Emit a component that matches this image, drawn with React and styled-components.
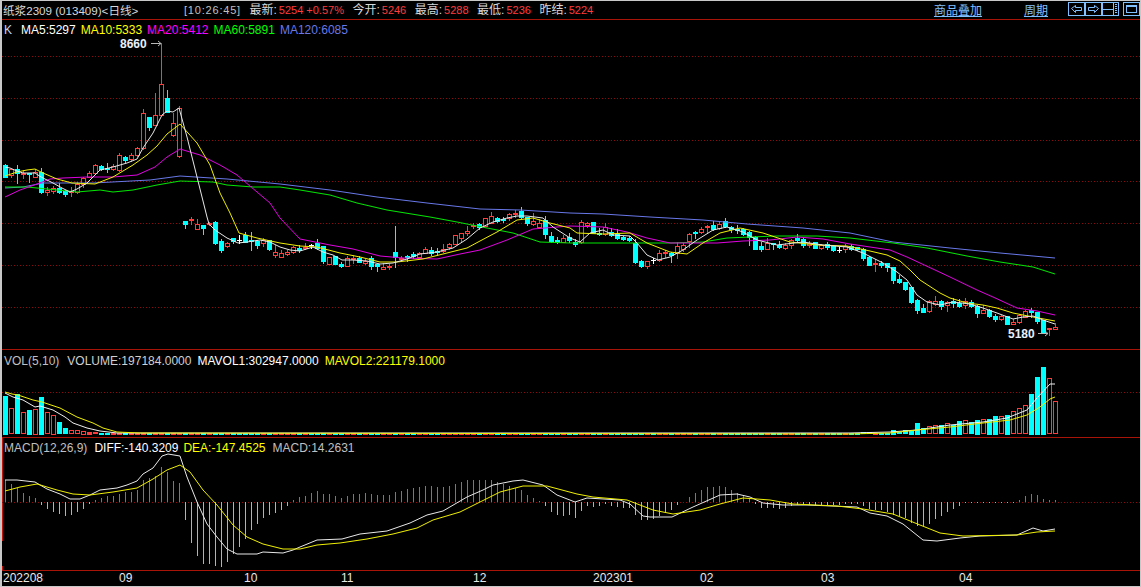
import React from "react";
import styled, { createGlobalStyle } from "styled-components";

const RED = "#ff3c3c";
const CYAN = "#00ffff";
const GRID = "#8c0a0a";
const FONT = `"Liberation Sans", "Noto Sans CJK SC", sans-serif`;

// [kind, bodyTop, bodyBottom, high, low] in page pixels
const CANDLES = `c 165 177 164 177|r 169 175 169 177|c 169 173 165 183|r 173 174 170 178|c 173 174 173 182|r 172 177 169 177|c 172 192 168 193|r 190 192 187 195|r 188 191 186 193|c 188 192 183 193|c 191 194 190 196|r 191 192 187 196|r 184 192 182 193|r 178 184 177 187|r 173 177 171 177|r 165 173 164 173|c 166 169 165 170|c 168 169 163 172|r 166 169 164 170|r 155 170 153 171|c 157 160 156 162|r 155 159 153 161|r 148 155 147 156|r 113 148 109 149|c 117 127 117 130|r 115 125 93 125|r 84 115 43 115|c 98 112 90 112|r 123 135 113 136|r 108 156 106 157|c 221 224 221 228|r 219 220 217 224|r 224 229 219 229|c 225 228 225 234|r 223 224 222 225|c 222 243 221 244|c 241 250 239 252|r 243 246 242 247|c 238 241 238 243|w 240 240 235 243|c 235 242 232 242|c 240 240 232 250|c 241 245 240 248|r 240 243 238 246|c 240 249 240 250|r 252 255 245 257|r 253 257 250 257|r 252 254 250 255|r 247 252 246 253|c 248 250 245 252|r 247 248 243 249|w 245 245 244 248|c 243 248 239 249|c 246 261 246 263|r 257 264 257 264|c 256 264 256 264|c 264 266 262 267|r 258 266 256 266|r 258 259 255 263|c 258 262 256 262|r 261 263 259 264|c 258 266 256 269|c 264 266 264 271|r 267 269 263 269|r 266 267 264 269|c 252 257 226 267|r 258 259 256 261|c 256 257 255 261|c 254 256 252 258|r 253 257 252 257|r 249 253 247 253|c 250 253 247 255|c 251 252 248 255|r 249 251 244 252|r 244 247 243 249|r 235 244 235 244|r 233 238 233 242|r 231 233 226 235|r 225 226 223 228|c 224 227 223 229|r 218 226 218 226|r 216 223 212 223|c 218 221 217 222|c 219 220 217 222|r 214 218 213 220|r 213 214 210 217|c 211 217 207 218|c 217 223 217 225|r 221 224 213 225|r 223 227 219 227|c 220 234 216 238|c 236 241 232 242|c 240 242 237 243|r 238 242 235 242|c 237 240 233 242|c 242 244 239 246|r 222 242 220 243|r 223 225 222 227|c 222 233 222 233|c 233 234 228 235|r 227 234 223 235|c 232 235 228 236|c 234 238 229 239|c 237 239 236 240|c 238 240 236 241|c 243 262 239 263|c 261 266 260 267|r 261 266 261 268|w 260 260 258 263|r 253 260 250 261|r 252 253 250 257|c 253 255 252 262|r 246 253 242 258|r 245 249 243 251|r 234 241 233 247|c 232 233 231 238|r 229 232 227 233|r 226 227 225 232|c 225 229 221 230|r 224 228 221 229|c 221 226 218 227|c 227 229 226 232|c 229 230 225 233|c 229 234 228 235|c 232 237 231 245|c 237 249 236 249|c 246 249 242 251|r 243 249 238 249|c 243 244 243 249|c 245 247 241 248|r 245 248 243 249|r 240 245 239 248|c 238 240 234 242|c 239 245 238 247|r 243 245 241 247|c 242 248 242 248|r 245 248 244 249|c 244 247 242 249|c 246 250 245 251|w 250 250 247 252|r 246 249 244 252|c 246 249 244 250|c 247 249 247 250|c 249 258 248 260|c 257 265 256 265|r 263 264 259 271|c 263 265 261 267|c 263 267 263 271|c 267 280 267 283|c 279 282 275 283|c 282 289 282 290|c 287 302 287 303|c 300 310 299 313|c 308 312 304 312|r 301 311 300 312|r 301 304 296 305|c 301 306 300 309|r 302 305 301 311|c 301 303 298 307|c 303 306 299 307|r 301 305 298 308|c 302 306 300 307|c 306 313 305 317|r 310 313 305 313|c 310 316 309 317|c 316 319 314 321|r 316 319 315 320|c 316 324 316 324|r 322 324 319 324|r 315 322 314 323|r 311 317 310 317|c 310 312 308 317|c 312 321 312 323|c 320 332 320 333|r 328 329 328 335|r 327 329 323 329`
  .split("|")
  .map((row) => row.split(" "))
  .map(([kind, ...nums]) => [kind, ...nums.map(Number)]);

const MA5 = "5,167 10,168 17,171 23,173 35,173 41,177 53,183 62,188 70,192 77,189 87,183 100,170 113,167 127,163 137,159 143,148 153,133 162,115 167,111 173,112 179,108 187,137 197,177 207,217 209,224 215,230 227,238 238,243 247,242 260,240 270,242 280,247 290,250 300,251 313,247 323,252 333,255 342,260 353,260 367,261 380,264 393,263 407,259 420,254 437,252 453,248 467,239 480,228 493,222 507,218 517,216 527,216 543,218 553,227 570,238 580,242 590,233 603,230 613,235 630,236 637,243 647,255 658,260 670,257 683,250 697,240 713,230 727,227 743,232 757,240 777,245 803,242 823,245 847,247 863,253 883,263 897,272 907,280 917,295 927,302 940,305 953,302 970,304 983,308 997,313 1013,319 1023,317 1033,316 1043,320 1055,324";
const MA10 = "5,176 17,172 27,170 35,169 43,173 57,179 72,183 95,184 113,177 133,165 147,155 157,146 167,134 180,124 197,143 210,165 220,193 230,213 239,233 257,238 280,243 300,246 317,247 340,253 360,257 380,262 397,262 423,259 447,253 467,248 480,241 497,232 517,220 533,218 550,223 570,228 577,233 603,234 630,233 647,243 670,252 687,254 703,243 720,233 740,228 763,233 790,242 817,245 847,246 870,251 887,255 900,261 910,270 920,280 940,293 950,298 967,303 983,305 997,308 1013,313 1033,317 1055,321";
const MA20 = "5,197 20,190 37,184 50,179 63,178 87,177 113,177 137,175 155,167 167,157 180,149 200,155 220,165 237,175 257,192 270,203 280,218 300,239 330,245 353,249 380,256 403,258 437,259 460,254 480,250 507,240 533,229 557,227 570,226 603,227 627,232 647,238 670,243 693,243 717,243 743,241 770,240 797,237 823,239 850,244 870,247 890,250 907,257 920,263 950,277 977,290 993,297 1017,308 1037,311 1055,315";
const MA60 = "5,187 27,187 47,189 77,192 100,190 113,192 133,190 157,185 180,181 213,182 227,185 253,187 280,187 300,190 330,195 357,203 387,210 430,217 457,222 487,228 513,233 540,242 570,243 603,243 670,243 703,242 727,238 750,237 777,236 817,236 850,238 893,243 927,248 967,256 1000,262 1033,267 1055,274";
const MA120 = "5,188 23,187 43,183 93,183 150,180 180,176 227,179 280,184 330,190 377,197 427,203 480,209 520,210 570,213 603,214 650,217 703,220 747,224 803,228 850,233 893,242 950,248 1000,253 1055,258";

const VOL_HEAD = [152, 190, 148, 202, 195, 192, 156, 202, 210, 232, 250, 256, 256, 258, 260, 262].map((z) => 345 + z / 3);
const VOL_TAIL = [262, 262, 263, 263, 263, 255, 262, 256, 255, 234, 250, 244, 241, 241, 235, 240, 228, 226, 232, 225, 223, 222, 213, 214, 210, 199, 190, 181, 147, 96, 66, 100, 169].map((z) => 345 + z / 3);
const MAVOL1 = "5,393 13,397 23,400 35,407 40,406 53,410 65,417 73,423 87,428 100,431 117,433 850,433 890,432 917,430 950,425 983,422 1007,418 1027,410 1037,398 1050,384 1055,384";
const MAVOL2 = "5,392 12,394 18,395 33,400 42,402 60,408 77,417 93,423 103,428 117,432 140,433 850,434 890,433 917,430 950,427 983,423 1010,420 1027,415 1040,407 1050,399 1055,397";

// bar ends of the MACD histogram, in 3x zoom rows below 437
const HIST = [130, 140, 152, 168, 176, 183, 204, 215, 225, 232, 236, 234, 225, 215, 201, 188, 182, 178, 178, 170, 166, 166, 160, 128, 122, 118, 90, 105, 132, 137, 248, 318, 358, 380, 380, 388, 390, 375, 350, 330, 305, 278, 260, 242, 235, 228, 218, 208, 188, 180, 177, 168, 162, 170, 171, 178, 183, 177, 170, 170, 168, 171, 174, 174, 174, 165, 162, 156, 153, 151, 148, 148, 149, 150, 147, 142, 135, 130, 129, 130, 129, 129, 135, 142, 148, 153, 160, 174, 183, 192, 206, 225, 233, 237, 235, 242, 221, 208, 210, 208, 202, 206, 210, 213, 212, 233, 248, 248, 245, 237, 228, 218, 203, 196, 180, 168, 160, 150, 150, 148, 150, 158, 168, 178, 183, 200, 213, 213, 213, 215, 213, 206, 204, 204, 205, 203, 203, 204, 204, 203, 201, 201, 201, 206, 215, 218, 220, 224, 233, 238, 242, 258, 266, 268, 260, 245, 237, 225, 215, 207, 197, 197, 197, 197, 197, 197, 197, 197, 197, 189, 178, 171, 174, 186, 189, 190];
const DIFF = "5,480 17,480 35,482 47,489 60,494 70,499 80,499 90,495 100,490 117,488 127,485 137,481 143,474 153,468 162,456 168,454 180,456 187,477 197,502 207,524 217,537 227,549 237,554 257,554 263,552 283,553 293,550 300,547 317,540 342,539 360,534 387,531 410,523 427,515 443,511 467,497 483,490 493,485 513,481 523,480 543,485 557,495 575,502 587,498 620,500 630,504 643,516 650,517 672,517 693,507 720,495 737,494 750,497 763,503 783,505 807,505 857,507 870,513 887,516 903,524 923,540 937,541 960,538 980,536 1017,535 1033,528 1043,531 1055,529";
const DEA = "5,491 20,487 37,484 57,490 73,494 90,495 113,492 137,488 153,479 167,470 180,465 190,472 203,490 217,505 233,525 247,537 263,544 283,549 300,549 317,545 340,543 367,539 393,534 417,528 433,520 460,512 480,502 500,492 523,486 547,486 577,494 593,497 627,500 653,510 673,514 700,510 720,504 743,498 770,500 793,504 837,506 863,509 893,514 920,525 940,533 963,536 1017,535 1037,532 1055,531";

const AXIS = [["202208", 3], ["09", 119], ["10", 244], ["11", 341], ["12", 473], ["202301", 593], ["02", 700], ["03", 821], ["04", 959]];

const candleX = (i) => 5.5 + 6 * i;

const GlobalStyle = createGlobalStyle`
  html, body {
    margin: 0;
    padding: 0;
    background: #000;
  }
`;

const Window = styled.div`
  box-sizing: border-box;
  width: 1141px;
  height: 587px;
  display: flex;
  flex-direction: column;
  background: #000;
  border: solid #c8c8c8;
  border-width: 1px 1px 1px 2px;
  overflow: hidden;
  font: 12px ${FONT};
`;

const TitleBar = styled.div`
  flex: none;
  height: 18px;
  display: flex;
  align-items: center;
  border-bottom: 1px solid #a81408;
  white-space: nowrap;
  color: #d8d8d8;
`;

const Title = styled.span`
  width: 181px;
  padding-left: 1px;
  flex: none;
  font-size: 11.6px;
`;

const Quotes = styled.div`
  display: flex;
  align-items: center;
  gap: 8.5px;
  line-height: 14px;
  padding-bottom: 1px;
`;

const Clock = styled.span`
  color: #c0c0c0;
  font-size: 11px;
  letter-spacing: 0.8px;
`;

const Quote = styled.span`
  color: #d8d8d8;
  display: flex;
  align-items: center;
`;

const Num = styled.b`
  font-weight: 400;
  font-size: 11px;
  margin-left: 2px;
  color: ${RED};
`;

const Tools = styled.div`
  margin-left: auto;
  padding-bottom: 2px;
  display: flex;
  align-items: center;
`;

const ToolLink = styled.a`
  color: #80c0ff;
  text-decoration: underline;
  margin-right: ${(p) => p.$gap}px;
`;

const IconBtn = styled.span`
  box-sizing: border-box;
  width: 17px;
  height: 14px;
  display: block;
  border: 1px solid #80c0ff;
  margin-left: ${(p) => p.$gap || 0}px;

  svg {
    display: block;
  }
`;

const Panel = styled.section`
  box-sizing: border-box;
  flex: none;
  display: flex;
  flex-direction: column;
  height: ${(p) => p.$h}px;
  border-top: ${(p) => (p.$line ? "1px solid #a81408" : "none")};
`;

const Legend = styled.div`
  box-sizing: border-box;
  flex: none;
  height: ${(p) => p.$h}px;
  display: flex;
  align-items: center;
  gap: ${(p) => p.$gap || 5}px;
  padding: ${(p) => p.$top || 0}px 0 0 2px;
  white-space: nowrap;
`;

const Item = styled.span`
  color: ${(p) => p.$c};
  margin-right: ${(p) => p.$gap || 0}px;
`;

const Chart = styled.svg`
  display: block;
  flex: none;
  overflow: visible;

  text {
    font: bold 12px ${FONT};
    fill: #e8f0ff;
  }
`;

const AxisBar = styled.svg`
  display: block;
  flex: none;
  border-top: 1px solid #a81408;

  text {
    font: 12px ${FONT};
    fill: #e8e8e8;
  }
`;

const Line = ({ points, color, width = 1 }) => (
  <polyline points={points} fill="none" stroke={color} strokeWidth={width} strokeLinejoin="round" />
);

const GridLine = ({ y }) => (
  <line x1="2" x2="1140" y1={y} y2={y} stroke={GRID} strokeDasharray="1 2" shapeRendering="crispEdges" />
);

const Candle = ({ data: [kind, top, bottom, high, low], i }) => {
  const x = candleX(i);
  const color = kind === "c" ? CYAN : kind === "w" ? "#fff" : RED;
  const thin = bottom - top <= 1;
  return (
    <g shapeRendering="crispEdges">
      <line x1={x} x2={x} y1={high} y2={low + 1} stroke={color} />
      {thin ? (
        <rect x={x - 2.5} y={top} width="5" height={kind === "w" ? 1 : 2} fill={color} />
      ) : kind === "c" ? (
        <rect x={x - 2.5} y={top} width="5" height={bottom - top + 1} fill={color} />
      ) : (
        <rect x={x - 2} y={top + 0.5} width="4" height={bottom - top} fill="#000" stroke={color} />
      )}
    </g>
  );
};

const VolBar = ({ i, top, kind }) => {
  const x = candleX(i);
  const h = 433.5 - top;
  if (kind === "r" && h > 2) {
    return <rect x={x - 2} y={Math.round(top) + 0.5} width="4" height={Math.round(h)} fill="#000" stroke={RED} shapeRendering="crispEdges" />;
  }
  return <rect x={x - 2.5} y={Math.round(top)} width="5" height={Math.max(Math.round(h) + 1, 2)} fill={kind === "r" ? RED : CYAN} shapeRendering="crispEdges" />;
};

const Arrow = ({ x1, x2, y }) => (
  <path d={`M${x1} ${y + 0.5}H${x2}M${x2 - 3} ${y - 2}L${x2} ${y + 0.5}L${x2 - 3} ${y + 3}`} fill="none" stroke="#b8b8b8" />
);

const icon = { width: 15, height: 12, fill: "none", stroke: "#80c0ff" };

const App = () => (
  <>
    <GlobalStyle />
    <Window>
      <TitleBar>
        <Title>纸浆2309 (013409)&lt;日线&gt;</Title>
        <Quotes>
          <Clock>[10:26:45]</Clock>
          <Quote>最新:<Num>5254 +0.57%</Num></Quote>
          <Quote>今开:<Num>5246</Num></Quote>
          <Quote>最高:<Num>5288</Num></Quote>
          <Quote>最低:<Num>5236</Num></Quote>
          <Quote>昨结:<Num>5224</Num></Quote>
        </Quotes>
        <Tools>
          <ToolLink $gap={42}>商品叠加</ToolLink>
          <ToolLink $gap={20}>周期</ToolLink>
          <IconBtn>
            <svg {...icon}><path d="M2.5 5.5L6.5 2.5V4.5H12.5V7.5H6.5V9.5Z" /></svg>
          </IconBtn>
          <IconBtn>
            <svg {...icon}><path d="M12.5 5.5L8.5 2.5V4.5H2.5V7.5H8.5V9.5Z" /></svg>
          </IconBtn>
          <IconBtn>
            <svg {...icon}><path d="M0 6.5H10M10.5 0V12" /><path d="M12 1.5H14M12 3.5H14M12 5.5H14M12 7.5H14M12 9.5H14" /></svg>
          </IconBtn>
          <IconBtn $gap={4}>
            <svg {...icon}><rect x="2.5" y="2.5" width="10" height="7" /><path d="M2.5 3.5H12.5" /></svg>
          </IconBtn>
        </Tools>
      </TitleBar>

      <Panel $h={329}>
        <Legend $h={20}>
          <Item $c="#c0d8f0" $gap={4}>K</Item>
          <Item $c="#fff">MA5:5297</Item>
          <Item $c="#ffff00">MA10:5333</Item>
          <Item $c="#ff00ff">MA20:5412</Item>
          <Item $c="#00ff00">MA60:5891</Item>
          <Item $c="#6878e8">MA120:6085</Item>
        </Legend>
        <Chart width="1138" height="309" viewBox="2 40 1138 309">
          {[56.5, 98.5, 140.5, 181.5, 223.5, 265.5, 307.5].map((y) => (
            <GridLine key={y} y={y} />
          ))}
          {CANDLES.map((c, i) => (
            <Candle key={i} data={c} i={i} />
          ))}
          <Line points={MA120} color="#6878e8" />
          <Line points={MA60} color="#00e800" />
          <Line points={MA20} color="#e000e0" />
          <Line points={MA10} color="#f0f000" />
          <Line points={MA5} color="#e8e8e8" />
          <text x="120" y="48">8660</text>
          <Arrow x1={151} x2={161} y={43} />
          <text x="1008" y="338">5180</text>
          <Arrow x1={1038} x2={1048} y={333} />
        </Chart>
      </Panel>

      <Panel $h={88} $line>
        <Legend $h={21} $gap={6}>
          <Item $c="#c0c0c0" $gap={2}>VOL(5,10)</Item>
          <Item $c="#d0d0d0">VOLUME:197184.0000</Item>
          <Item $c="#fff">MAVOL1:302947.0000</Item>
          <Item $c="#ffff00">MAVOL2:221179.1000</Item>
        </Legend>
        <Chart width="1138" height="66" viewBox="2 371 1138 66">
          <GridLine y={392.5} />
          {CANDLES.map(([kind], i) => {
            const tail = i - 143;
            const top = i < VOL_HEAD.length ? VOL_HEAD[i] : tail >= 0 ? VOL_TAIL[tail] : 433;
            return <VolBar key={i} i={i} top={top} kind={kind === "w" ? "c" : kind} />;
          })}
          <Line points={MAVOL1} color="#f0f0f0" />
          <Line points={MAVOL2} color="#f0f000" />
        </Chart>
      </Panel>

      <Panel $h={133} $line>
        <Legend $h={17} $top={2}>
          <Item $c="#c0c0c0" $gap={2}>MACD(12,26,9)</Item>
          <Item $c="#fff">DIFF:-140.3209</Item>
          <Item $c="#ffff00" $gap={2}>DEA:-147.4525</Item>
          <Item $c="#c0c0c0">MACD:14.2631</Item>
        </Legend>
        <Chart width="1138" height="115" viewBox="2 455 1138 115">
          <path d="M2.5 438V541M2.5 566V570" stroke="#c81408" shapeRendering="crispEdges" />
          <GridLine y={502.5} />
          {HIST.map((z, i) => (
            <line
              key={i}
              x1={candleX(i)}
              x2={candleX(i)}
              y1="502"
              y2={437 + z / 3}
              stroke={z < 197 ? "#e84848" : "#30e8f0"}
              shapeRendering="crispEdges"
            />
          ))}
          <Line points={DIFF} color="#e8e8e8" />
          <Line points={DEA} color="#f0f000" />
        </Chart>
      </Panel>

      <AxisBar width="1138" height="15" viewBox="2 571 1138 15">
        {AXIS.map(([label, x]) => (
          <text key={label} x={x} y="582">{label}</text>
        ))}
      </AxisBar>
    </Window>
  </>
);

export default App;
